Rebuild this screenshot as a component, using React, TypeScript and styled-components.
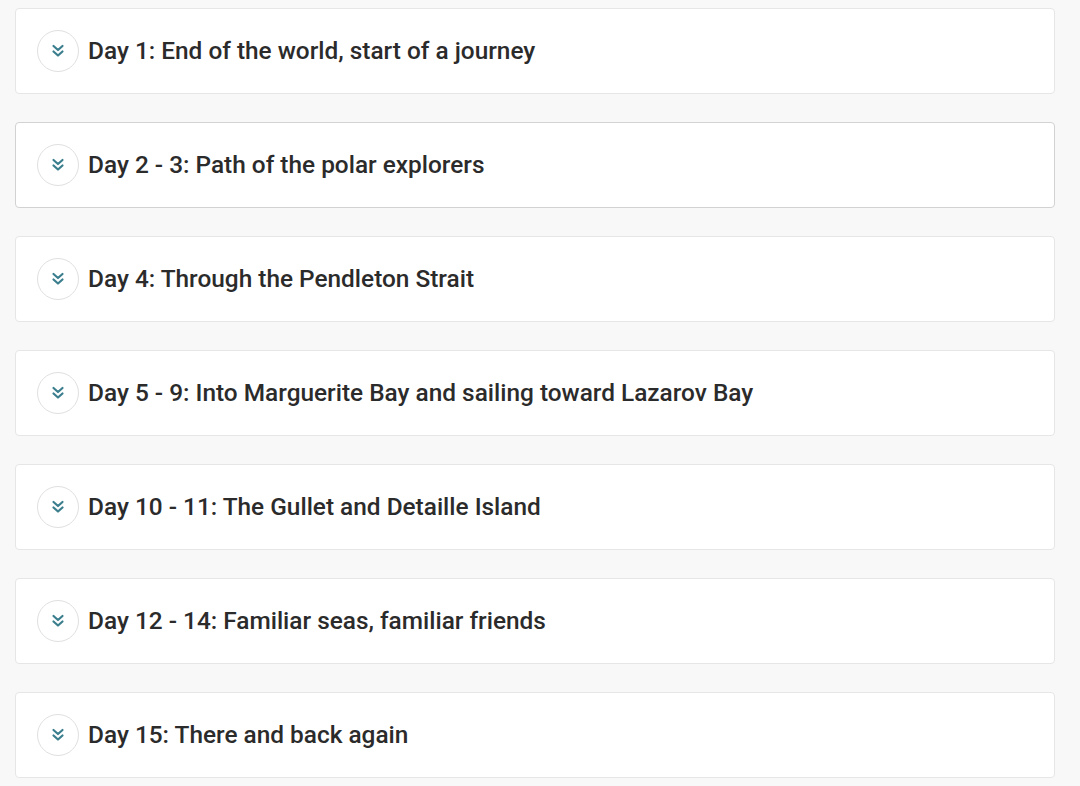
import React from "react";
import styled, { createGlobalStyle } from "styled-components";

const Global = createGlobalStyle`
  html, body { margin: 0; padding: 0; background: #f8f8f8; }
  body { font-family: Roboto, "Noto Sans", sans-serif; }
`;

const List = styled.div`
  display: flex;
  flex-direction: column;
  gap: 28px;
  padding: 8px 25px 0 15px;
`;

const Card = styled.div<{ $hover?: boolean }>`
  display: flex;
  align-items: center;
  gap: 9px;
  height: 84px;
  padding: 0 21px;
  background: #fff;
  border: 1px solid ${(p) => (p.$hover ? "#d2d2d2" : "#e6e6e6")};
  border-radius: 4px;
`;

const IconCircle = styled.div`
  flex: none;
  width: 40px;
  height: 40px;
  border-radius: 50%;
  border: 1px solid #e0e0e0;
  display: flex;
  align-items: center;
  justify-content: center;
  color: #3b7e8e;
`;

const Title = styled.h3`
  margin: 0;
  padding-bottom: 2px;
  font-family: Roboto, "Noto Sans", sans-serif;
  font-weight: 500;
  font-size: 24.4px;
  color: #2b2b2b;
  letter-spacing: 0;
`;

const Chevrons = () => (
  <svg width="14" height="14" viewBox="0 0 14 14" fill="none" stroke="currentColor" strokeWidth="2.2" strokeLinecap="round" strokeLinejoin="round">
    <polyline points="2.5,2 7,6 11.5,2" />
    <polyline points="2.5,7.5 7,11.5 11.5,7.5" />
  </svg>
);

const days = [
  "Day 1: End of the world, start of a journey",
  "Day 2 - 3: Path of the polar explorers",
  "Day 4: Through the Pendleton Strait",
  "Day 5 - 9: Into Marguerite Bay and sailing toward Lazarov Bay",
  "Day 10 - 11: The Gullet and Detaille Island",
  "Day 12 - 14: Familiar seas, familiar friends",
  "Day 15: There and back again",
];

export default function App() {
  return (
    <>
      <Global />
      <List>
        {days.map((d, i) => (
          <Card key={d} $hover={i === 1}>
            <IconCircle>
              <Chevrons />
            </IconCircle>
            <Title>{d}</Title>
          </Card>
        ))}
      </List>
    </>
  );
}
